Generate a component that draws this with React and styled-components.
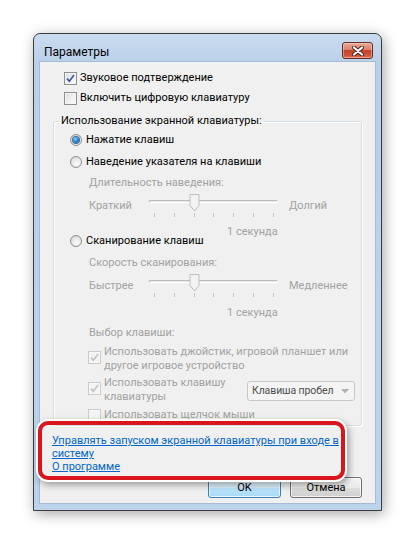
import React from "react";
import styled, { createGlobalStyle } from "styled-components";

const GlobalStyle = createGlobalStyle`
  body {
    margin: 0;
    background: #ffffff;
    font-family: Roboto, "Noto Sans", "DejaVu Sans", sans-serif;
    font-size: 11px;
  }
`;

const Page = styled.div`
  position: relative;
  width: 415px;
  height: 544px;
  padding: 33px 0 0 33px;
  box-sizing: border-box;
`;

const Window = styled.div`
  width: 349px;
  height: 478px;
  box-sizing: border-box;
  border: 1px solid #3d3d3d;
  border-radius: 7px 7px 0 0;
  padding: 0 6px 7px 6px;
  background: linear-gradient(180deg, #c9dbef 0px, #b9d0ea 30px, #bcd3ec 100%);
  box-shadow: 2px 3px 14px rgba(0, 0, 0, 0.35);
`;

const TitleBar = styled.div`
  height: 28px;
  display: flex;
  align-items: flex-start;
  justify-content: space-between;
  padding: 0 2px 0 4px;
`;

const Title = styled.div`
  margin-top: 11px;
  line-height: 14px;
  font-size: 12px;
  color: #000;
`;

const CloseButton = styled.div`
  margin-top: 8px;
  width: 31px;
  height: 17px;
  box-sizing: border-box;
  border: 1px solid #6a2a22;
  border-radius: 3px;
  background: linear-gradient(180deg, #e9a898 0%, #d9826d 45%, #c2432b 50%, #cf563c 85%, #e07a5c 100%);
  box-shadow: inset 0 0 0 1px rgba(255, 255, 255, 0.35);
  display: flex;
  align-items: center;
  justify-content: center;
`;

const Client = styled.div`
  height: 441px;
  box-sizing: border-box;
  background: #f0f0f0;
  box-shadow: 0 0 0 1px #a7bcd4;
  padding-top: 6px;
`;

const Row = styled.div`
  display: flex;
  align-items: ${(p) => (p.$top ? "flex-start" : "center")};
  height: ${(p) => (p.$h ? `${p.$h}px` : "auto")};
  margin-top: ${(p) => p.$mt || 0}px;
  padding-left: ${(p) => p.$indent || 0}px;
  line-height: 14px;
  color: ${(p) => (p.$off ? "#a2a2a2" : "#000")};
  white-space: nowrap;
`;

const Box = styled.span`
  flex: none;
  width: 13px;
  height: 13px;
  box-sizing: border-box;
  margin-right: 3px;
  margin-top: ${(p) => p.$mt || 0}px;
  border: 1px solid ${(p) => (p.$off ? "#cbcbcb" : "#8e8f8f")};
  background: ${(p) =>
    p.$off
      ? "#f4f4f4"
      : "linear-gradient(135deg, #d9dbe0 0%, #f3f3f3 60%, #fbfbfb 100%)"};
  box-shadow: inset 0 0 0 1px ${(p) => (p.$off ? "#f7f7f7" : "#f4f4f4")};
  display: flex;
  align-items: center;
  justify-content: center;
`;

const Radio = styled.span`
  flex: none;
  width: 12px;
  height: 12px;
  box-sizing: border-box;
  margin-right: 4px;
  border-radius: 50%;
  border: 1px solid #8e8f8f;
  background: radial-gradient(circle at 60% 65%, #fbfbfb 0%, #e6e6e6 55%, #c9c9c9 100%);
  display: flex;
  align-items: center;
  justify-content: center;
`;

const Dot = styled.span`
  width: 6px;
  height: 6px;
  border-radius: 50%;
  background: radial-gradient(circle at 40% 35%, #9fd8ff 0%, #2a86d0 45%, #0b3f73 100%);
  box-shadow: 0 0 0 1px #3a6ea5;
`;

const Group = styled.fieldset`
  margin: 6px 0 0 13px;
  width: 309px;
  box-sizing: border-box;
  border: 1px solid #d5dfe5;
  border-radius: 3px;
  box-shadow: inset 1px 1px 0 #ffffff, 1px 1px 0 #ffffff;
  padding: 1px 0 3px 0;
  min-width: 0;
`;

const Legend = styled.legend`
  margin-left: 5px;
  padding: 0 2px;
  line-height: 14px;
  color: #000;
`;

const GroupBody = styled.div`
  padding-left: 16px;
  padding-right: 6px;
`;

const Slider = styled.div`
  display: flex;
  align-items: flex-start;
  height: 30px;
  padding-left: 19px;
  color: #a2a2a2;
  line-height: 14px;
`;

const SideLabel = styled.span`
  margin-top: 6px;
  width: ${(p) => (p.$w ? `${p.$w}px` : "auto")};
  padding-left: ${(p) => p.$pl || 0}px;
  white-space: nowrap;
`;

const Track = styled.div`
  position: relative;
  width: 129px;
  height: 30px;
  flex: none;
`;

const Groove = styled.div`
  margin-top: 7px;
  height: 3px;
  box-sizing: border-box;
  border: 1px solid #bdbdbd;
  border-bottom-color: #ffffff;
  border-right-color: #ffffff;
  border-radius: 1px;
  background: #e9e9e9;
`;

const Ticks = styled.div`
  display: flex;
  justify-content: space-between;
  padding: 0 4px 0 5px;
  margin-top: 10px;
`;

const Tick = styled.span`
  width: 1px;
  height: 4px;
  background: #c3c3c3;
`;

const Thumb = styled.svg`
  position: absolute;
  left: 40px;
  top: 1px;
`;

const Links = styled.div`
  margin-top: 8px;
  padding-left: 12px;
  line-height: 13px;
`;

const Link = styled.a`
  display: inline-block;
  color: #0066cc;
  text-decoration: underline;
  cursor: pointer;
`;

const Buttons = styled.div`
  margin-top: 4px;
  display: flex;
  justify-content: flex-end;
  gap: 9px;
  padding-right: 13px;
`;

const Button = styled.button`
  width: ${(p) => p.$w}px;
  height: 21px;
  box-sizing: border-box;
  padding: 0;
  font-family: inherit;
  font-size: 11px;
  color: #000;
  border-radius: 3px;
  border: 1px solid ${(p) => (p.$primary ? "#3c7fb1" : "#707070")};
  background: ${(p) =>
    p.$primary
      ? "linear-gradient(180deg, #eaf6fd 0%, #d9f0fc 50%, #bee6fd 51%, #a7d9f5 100%)"
      : "linear-gradient(180deg, #f2f2f2 0%, #ebebeb 50%, #dddddd 51%, #cfcfcf 100%)"};
  box-shadow: inset 0 0 0 1px rgba(255, 255, 255, 0.75);
`;

const Select = styled.div`
  margin-left: auto;
  margin-top: 5px;
  width: 108px;
  height: 20px;
  box-sizing: border-box;
  border: 1px solid #c7c7c7;
  border-radius: 3px;
  background: #f4f4f4;
  display: flex;
  align-items: center;
  justify-content: space-between;
  padding: 0 5px 0 4px;
  font-size: 10.5px;
  letter-spacing: -0.1px;
  color: #4d4d4d;
`;

const Highlight = styled.div`
  position: absolute;
  left: 38px;
  top: 421px;
  width: 307px;
  height: 59px;
  box-sizing: border-box;
  border: 4px solid #d9161d;
  border-radius: 10px;
  box-shadow: 0 0 0 2px #ffffff, 2px 3px 7px 2px rgba(0, 0, 0, 0.35);
  pointer-events: none;
`;

const Check = ({ off }) => (
  <svg width="9" height="9" viewBox="0 0 9 9">
    <path
      d="M1 4.6 L3.4 7.2 L8 1"
      fill="none"
      stroke={off ? "#c2c2c2" : "#3c54a0"}
      strokeWidth="1.6"
    />
  </svg>
);

const SliderControl = ({ left, right }) => (
  <Slider>
    <SideLabel $w={60}>{left}</SideLabel>
    <Track>
      <Groove />
      <Ticks>
        {[0, 1, 2, 3, 4, 5, 6].map((i) => (
          <Tick key={i} />
        ))}
      </Ticks>
      <Thumb width="11" height="18" viewBox="0 0 11 18">
        <path d="M1 0.5 H10 V11.5 L5.5 17 L1 11.5 Z" fill="#f3f3f3" stroke="#bdbdbd" />
      </Thumb>
    </Track>
    <SideLabel $pl={11}>{right}</SideLabel>
  </Slider>
);

export default function App() {
  return (
    <>
      <GlobalStyle />
      <Page>
        <Window>
          <TitleBar>
            <Title>Параметры</Title>
            <CloseButton>
              <svg width="12" height="10" viewBox="0 0 12 10">
                <path d="M2 1.5 L10 8.5 M10 1.5 L2 8.5" stroke="#4a1e19" strokeWidth="4" strokeLinecap="round" />
                <path d="M2 1.5 L10 8.5 M10 1.5 L2 8.5" stroke="#ffffff" strokeWidth="2.2" strokeLinecap="round" />
              </svg>
            </CloseButton>
          </TitleBar>
          <Client>
            <Row $h={20} $indent={24}>
              <Box>
                <Check />
              </Box>
              Звуковое подтверждение
            </Row>
            <Row $h={20} $indent={24}>
              <Box />
              Включить цифровую клавиатуру
            </Row>

            <Group>
              <Legend>Использование экранной клавиатуры:</Legend>
              <GroupBody>
                <Row $h={22}>
                  <Radio>
                    <Dot />
                  </Radio>
                  Нажатие клавиш
                </Row>
                <Row $h={22}>
                  <Radio />
                  Наведение указателя на клавиши
                </Row>
                <Row $h={20} $indent={19} $off>
                  Длительность наведения:
                </Row>
                <SliderControl left="Краткий" right="Долгий" />
                <Row $h={14} $mt={2} $indent={157} $off>
                  1 секунда
                </Row>
                <Row $h={14} $mt={-5}>
                  <Radio />
                  Сканирование клавиш
                </Row>
                <Row $h={20} $mt={5} $indent={19} $off>
                  Скорость сканирования:
                </Row>
                <SliderControl left="Быстрее" right="Медленнее" />
                <Row $h={20} $indent={157} $off>
                  1 секунда
                </Row>
                <Row $h={20} $indent={19} $off>
                  Выбор клавиши:
                </Row>
                <Row $top $mt={2} $indent={18} $off>
                  <Box $off $mt={6}>
                    <Check off />
                  </Box>
                  <span>
                    Использовать джойстик, игровой планшет или
                    <br />
                    другое игровое устройство
                  </span>
                </Row>
                <Row $top $mt={3} $indent={18} $off>
                  <Box $off $mt={6}>
                    <Check off />
                  </Box>
                  <span>
                    Использовать клавишу
                    <br />
                    клавиатуры
                  </span>
                  <Select>
                    Клавиша пробел
                    <svg width="8" height="5" viewBox="0 0 8 5">
                      <path d="M0 0 H8 L4 4.5 Z" fill="#b3b3b3" />
                    </svg>
                  </Select>
                </Row>
                <Row $h={14} $mt={4} $indent={18} $off>
                  <Box $off />
                  Использовать щелчок мыши
                </Row>
              </GroupBody>
            </Group>

            <Links>
              <Link>
                Управлять запуском экранной клавиатуры при входе в
                <br />
                систему
              </Link>
              <br />
              <Link>О программе</Link>
            </Links>

            <Buttons>
              <Button $primary $w={73}>
                OK
              </Button>
              <Button $w={72}>Отмена</Button>
            </Buttons>
          </Client>
        </Window>
        <Highlight />
      </Page>
    </>
  );
}
